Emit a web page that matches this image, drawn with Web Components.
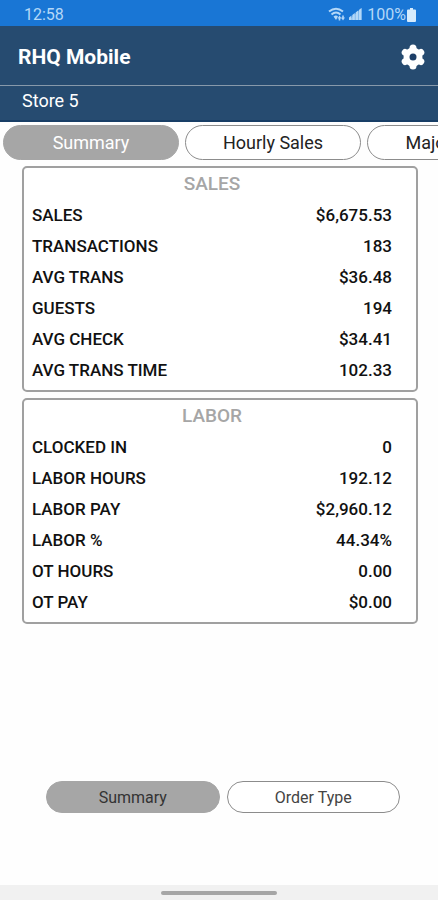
<!DOCTYPE html>
<html lang="en">
<head>
<meta charset="utf-8">
<meta name="viewport" content="width=device-width, initial-scale=1">
<title>RHQ Mobile</title>
<style>
  body {
    margin: 0;
    background: #fefefe;
    font-family: Roboto, "Liberation Sans", sans-serif;
    color: #111;
  }
</style>
</head>
<body>
<rhq-app></rhq-app>

<script>
class StatusBar extends HTMLElement {
  constructor() {
    super();
    this.attachShadow({ mode: 'open' });
  }
  connectedCallback() {
    this.shadowRoot.innerHTML = `
      <style>
        :host {
          display: flex;
          align-items: center;
          justify-content: space-between;
          height: 26px;
          padding: 3px 22px 0 24px;
          box-sizing: border-box;
          background: #1976d5;
          color: #b4d8f8;
          font-size: 16px;
          line-height: 20px;
        }
        .icons { display: flex; align-items: center; }
        svg { display: block; fill: currentColor; }
        .wifi { margin-right: 3px; }
        .signal { margin-right: 5px; }
        .battery { margin-left: 1px; }
      </style>
      <span>${this.getAttribute('time')}</span>
      <div class="icons">
        <svg class="wifi" width="18" height="15" viewBox="0 0 18 15">
          <path d="M1 4.500Q8 -1 15 4.500M3.500 7.500Q8 3.500 12.500 7.500" fill="none" stroke="currentColor" stroke-width="2"/>
          <path d="M5.500 9.500Q8 7.500 10 9.500L8 13zM11.500 8.500l2 3h-1.200v2h-1.600v-2H9.500zM15 13.500l-2-3h1.200v-2h1.600v2H17z"/>
        </svg>
        <svg class="signal" width="13" height="13" viewBox="0 0 13 13">
          <path d="M0 12L12.500 0v12z" opacity=".6"/>
          <path d="M0 9.500L2.500 7.500V12H0zM3.300 7L5.800 5v7H3.300zM6.600 4.500L9.100 2.500V12H6.600zM9.900 2L12.500 0v12H9.900z"/>
        </svg>
        <span>${this.getAttribute('battery')}</span>
        <svg class="battery" width="9" height="14" viewBox="0 0 9 14">
          <path d="M3 0h3v1.500h2q1 0 1 1V13q0 1-1 1H1q-1 0-1-1V2.500q0-1 1-1h2z" fill="#d5ebfd"/>
        </svg>
      </div>`;
  }
}
customElements.define('status-bar', StatusBar);

class AppHeader extends HTMLElement {
  constructor() {
    super();
    this.attachShadow({ mode: 'open' });
  }
  connectedCallback() {
    this.shadowRoot.innerHTML = `
      <style>
        :host { display: block; background: #264b70; color: #fff; }
        .bar {
          display: flex;
          align-items: center;
          justify-content: space-between;
          height: 60px;
          padding: 2px 13px 0 18px;
          box-sizing: border-box;
          border-bottom: 1px solid #8799ab;
        }
        h1 { margin: 0; font-size: 21px; font-weight: 700; line-height: 28px; }
        button { padding: 0; border: 0; background: none; color: #fff; }
        svg { display: block; fill: currentColor; }
        .store {
          height: 36px;
          box-sizing: border-box;
          padding: 0 22px;
          border-bottom: 2px solid #183e66;
          font-size: 18px;
          line-height: 30px;
        }
      </style>
      <div class="bar">
        <h1><slot></slot></h1>
        <button type="button" aria-label="Settings">
          <svg width="24" height="26" viewBox="0 0 24 26">
            <g stroke="currentColor" stroke-width="7" stroke-linecap="round" stroke-linejoin="round">
              <path d="M12 4v18M4.200 8.500l15.600 9M4.200 17.500l15.600-9"/>
            </g>
            <circle cx="12" cy="13" r="9.500"/>
            <circle cx="12" cy="13" r="3.500" fill="#1d3f68"/>
          </svg>
        </button>
      </div>
      <div class="store">${this.getAttribute('store')}</div>`;
  }
}
customElements.define('app-header', AppHeader);

class PillButton extends HTMLElement {
  constructor() {
    super();
    this.attachShadow({ mode: 'open' });
  }
  connectedCallback() {
    this.shadowRoot.innerHTML = `
      <style>
        :host { display: block; }
        button {
          display: block;
          width: 100%;
          height: var(--pill-height, 35px);
          padding: 0;
          border: 1px solid #8c8c8c;
          border-radius: 18px;
          background: #fff;
          color: var(--pill-color, #222);
          font: inherit;
        }
        :host([selected]) button {
          border-color: #a6a6a6;
          background: #a6a6a6;
          color: var(--pill-selected, #fff);
        }
      </style>
      <button type="button" aria-pressed="${this.hasAttribute('selected')}"><slot></slot></button>`;
  }
}
customElements.define('pill-button', PillButton);

class StatPanel extends HTMLElement {
  constructor() {
    super();
    this.attachShadow({ mode: 'open' });
  }
  set rows(list) {
    this.shadowRoot.querySelector('tbody').innerHTML = list
      .map(([label, value]) => `<tr><th scope="row">${label}</th><td>${value}</td></tr>`)
      .join('');
  }
  connectedCallback() {
    this.shadowRoot.innerHTML = `
      <style>
        :host {
          display: block;
          padding-bottom: 4px;
          border: 2px solid #a0a0a0;
          border-radius: 5px;
          background: #fff;
        }
        table { width: 100%; border-collapse: collapse; font-weight: 500; }
        caption {
          height: 32px;
          padding-right: 16px;
          color: #a6a6a6;
          font-size: 19px;
          line-height: 32px;
        }
        th, td { height: 31px; padding: 0; font-size: 17px; line-height: 31px; }
        th { padding-left: 8px; text-align: left; font-weight: 500; }
        td { padding-right: 24px; text-align: right; }
      </style>
      <table>
        <caption>${this.getAttribute('heading')}</caption>
        <tbody></tbody>
      </table>`;
  }
}
customElements.define('stat-panel', StatPanel);

class RhqApp extends HTMLElement {
  constructor() {
    super();
    this.attachShadow({ mode: 'open' });
  }
  connectedCallback() {
    this.shadowRoot.innerHTML = `
      <style>
        :host { display: flex; flex-direction: column; min-height: 100vh; }
        .tabs {
          display: flex;
          gap: 6px;
          padding: 3px 3px 6px;
          overflow: hidden;
          font-size: 18px;
        }
        .tabs pill-button { flex: 0 0 176px; }
        main {
          display: flex;
          flex-direction: column;
          flex: 1;
          gap: 6px;
          padding: 0 20px 0 22px;
        }
        .views {
          --pill-height: 32px;
          --pill-color: #444;
          --pill-selected: #333;
          display: grid;
          grid-template-columns: 1fr 1fr;
          gap: 7px;
          padding: 0 38px 72px 46px;
          font-size: 16px;
        }
        .home {
          display: flex;
          justify-content: center;
          height: 15px;
          align-items: center;
          background: #f1f1f1;
        }
        .home i { width: 116px; height: 4px; border-radius: 2px; background: #a6a6a6; }
      </style>
      <status-bar time="12:58" battery="100%"></status-bar>
      <app-header store="Store 5">RHQ Mobile</app-header>
      <nav class="tabs">
        <pill-button selected>Summary</pill-button>
        <pill-button>Hourly Sales</pill-button>
        <pill-button>Major Group</pill-button>
      </nav>
      <main>
        <stat-panel id="sales" heading="SALES"></stat-panel>
        <stat-panel id="labor" heading="LABOR"></stat-panel>
      </main>
      <nav class="views">
        <pill-button selected>Summary</pill-button>
        <pill-button>Order Type</pill-button>
      </nav>
      <div class="home"><i></i></div>`;

    this.shadowRoot.getElementById('sales').rows = [
      ['SALES', '$6,675.53'],
      ['TRANSACTIONS', '183'],
      ['AVG TRANS', '$36.48'],
      ['GUESTS', '194'],
      ['AVG CHECK', '$34.41'],
      ['AVG TRANS TIME', '102.33']
    ];
    this.shadowRoot.getElementById('labor').rows = [
      ['CLOCKED IN', '0'],
      ['LABOR HOURS', '192.12'],
      ['LABOR PAY', '$2,960.12'],
      ['LABOR %', '44.34%'],
      ['OT HOURS', '0.00'],
      ['OT PAY', '$0.00']
    ];
  }
}
customElements.define('rhq-app', RhqApp);
</script>
</body>
</html>
